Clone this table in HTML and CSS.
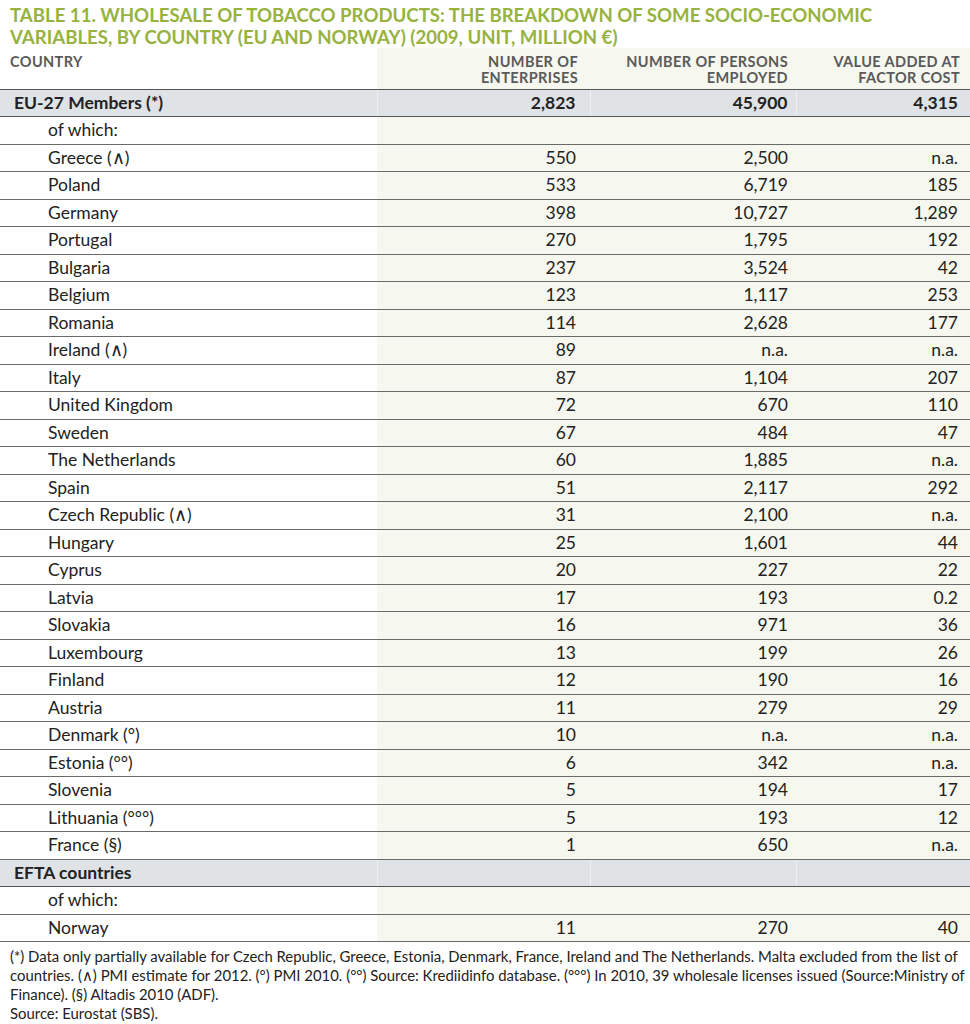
FILE: index.html
```html
<!DOCTYPE html>
<html>
<head>
<meta charset="utf-8">
<link rel="stylesheet" href="styles.css">
</head>
<body>
<div class="page">
  <h1 class="title">TABLE 11. WHOLESALE OF TOBACCO PRODUCTS: THE BREAKDOWN OF SOME SOCIO-ECONOMIC<br>VARIABLES, BY COUNTRY (EU AND NORWAY) (2009, UNIT, MILLION €)</h1>
  <table class="data">
    <colgroup>
      <col class="c1"><col class="c2"><col class="c3"><col class="c4">
    </colgroup>
    <thead>
      <tr>
        <th class="hcountry">COUNTRY</th>
        <th class="hnum">NUMBER OF<br>ENTERPRISES</th>
        <th class="hnum">NUMBER OF PERSONS<br>EMPLOYED</th>
        <th class="hnum">VALUE ADDED AT<br>FACTOR COST</th>
      </tr>
    </thead>
    <tbody>
      <tr class="group"><td class="name">EU-27 Members (*)</td><td>2,823</td><td>45,900</td><td>4,315</td></tr>
      <tr><td class="sub">of which:</td><td></td><td></td><td></td></tr>
      <tr><td class="sub">Greece (∧)</td><td>550</td><td>2,500</td><td>n.a.</td></tr>
      <tr><td class="sub">Poland</td><td>533</td><td>6,719</td><td>185</td></tr>
      <tr><td class="sub">Germany</td><td>398</td><td>10,727</td><td>1,289</td></tr>
      <tr><td class="sub">Portugal</td><td>270</td><td>1,795</td><td>192</td></tr>
      <tr><td class="sub">Bulgaria</td><td>237</td><td>3,524</td><td>42</td></tr>
      <tr><td class="sub">Belgium</td><td>123</td><td>1,117</td><td>253</td></tr>
      <tr><td class="sub">Romania</td><td>114</td><td>2,628</td><td>177</td></tr>
      <tr><td class="sub">Ireland (∧)</td><td>89</td><td>n.a.</td><td>n.a.</td></tr>
      <tr><td class="sub">Italy</td><td>87</td><td>1,104</td><td>207</td></tr>
      <tr><td class="sub">United Kingdom</td><td>72</td><td>670</td><td>110</td></tr>
      <tr><td class="sub">Sweden</td><td>67</td><td>484</td><td>47</td></tr>
      <tr><td class="sub">The Netherlands</td><td>60</td><td>1,885</td><td>n.a.</td></tr>
      <tr><td class="sub">Spain</td><td>51</td><td>2,117</td><td>292</td></tr>
      <tr><td class="sub">Czech Republic (∧)</td><td>31</td><td>2,100</td><td>n.a.</td></tr>
      <tr><td class="sub">Hungary</td><td>25</td><td>1,601</td><td>44</td></tr>
      <tr><td class="sub">Cyprus</td><td>20</td><td>227</td><td>22</td></tr>
      <tr><td class="sub">Latvia</td><td>17</td><td>193</td><td>0.2</td></tr>
      <tr><td class="sub">Slovakia</td><td>16</td><td>971</td><td>36</td></tr>
      <tr><td class="sub">Luxembourg</td><td>13</td><td>199</td><td>26</td></tr>
      <tr><td class="sub">Finland</td><td>12</td><td>190</td><td>16</td></tr>
      <tr><td class="sub">Austria</td><td>11</td><td>279</td><td>29</td></tr>
      <tr><td class="sub">Denmark (°)</td><td>10</td><td>n.a.</td><td>n.a.</td></tr>
      <tr><td class="sub">Estonia (°°)</td><td>6</td><td>342</td><td>n.a.</td></tr>
      <tr><td class="sub">Slovenia</td><td>5</td><td>194</td><td>17</td></tr>
      <tr><td class="sub">Lithuania (°°°)</td><td>5</td><td>193</td><td>12</td></tr>
      <tr><td class="sub">France (§)</td><td>1</td><td>650</td><td>n.a.</td></tr>
      <tr class="group"><td class="name">EFTA countries</td><td></td><td></td><td></td></tr>
      <tr><td class="sub">of which:</td><td></td><td></td><td></td></tr>
      <tr><td class="sub">Norway</td><td>11</td><td>270</td><td>40</td></tr>
    </tbody>
  </table>
  <div class="notes">
    <p>(*) Data only partially available for Czech Republic, Greece, Estonia, Denmark, France, Ireland and The Netherlands. Malta excluded from the list of countries. (∧) PMI estimate for 2012. (°) PMI 2010. (°°) Source: Krediidinfo database. (°°°) In 2010, 39 wholesale licenses issued (Source:Ministry of Finance). (§) Altadis 2010 (ADF).</p>
    <p>Source: Eurostat (SBS).</p>
  </div>
</div>
</body>
</html>
```

FILE: styles.css
```css
* { box-sizing: border-box; }
html, body { margin: 0; padding: 0; background: #ffffff; }
body {
  font-family: "Lato", "Open Sans", "Liberation Sans", sans-serif;
  color: #222;
  width: 970px;
}
.page { width: 970px; }
.title {
  margin: 0;
  padding: 4px 0 0 10px;
  height: 48px;
  font-size: 18.6px;
  line-height: 22px;
  font-weight: 700;
  color: #97b23e;
  letter-spacing: 0;
}
.data {
  width: 970px;
  border-collapse: collapse;
  table-layout: fixed;
}
.c1 { width: 377px; }
.c2 { width: 213px; background: #f6f7ee; }
.c3 { width: 206px; background: #f6f7ee; }
.c4 { width: 174px; background: #f6f7ee; }
thead th {
  height: 41px;
  vertical-align: top;
  font-size: 14.5px;
  line-height: 15.5px;
  letter-spacing: 0.4px;
  font-weight: 700;
  color: #5a5a5a;
  padding-top: 6px;
  border-bottom: 1px solid #555;
}
.hcountry { text-align: left; padding-left: 10px; background: #fff; }
.hnum { text-align: right; }
thead th:nth-child(2) { padding-right: 12px; }
thead th:nth-child(3) { padding-right: 8px; }
thead th:nth-child(4) { padding-right: 10px; }
tbody td {
  height: 27.5px;
  padding: 0;
  font-size: 17.5px;
  line-height: 20px;
  border-bottom: 1px solid #6a6a6a;
  text-align: right;
  vertical-align: middle;
}
tbody td:nth-child(1) { text-align: left; background: #fff; }
tbody td:nth-child(2) { padding-right: 14px; }
tbody td:nth-child(3) { padding-right: 8px; }
tbody td:nth-child(4) { padding-right: 12px; }
.sub { padding-left: 48px !important; }
.group td {
  background: #dfe3e6 !important;
  font-weight: 700;
  border-bottom: 1px solid #555;
}
.group td + td { border-left: 1px solid #eef0f2; }
.group .name { padding-left: 14px; }
.notes {
  padding: 5px 0 0 10px;
  font-size: 14.9px;
  line-height: 19px;
  color: #222;
}
.notes p { margin: 0; }
```
